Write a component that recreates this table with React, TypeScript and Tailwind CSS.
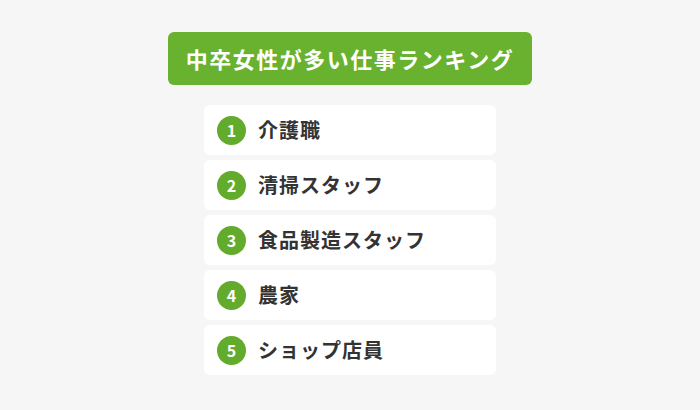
import React from "react";

const jobs = ["介護職", "清掃スタッフ", "食品製造スタッフ", "農家", "ショップ店員"];

export default function App() {
  return (
    <div
      className="w-[700px] h-[410px] bg-[#f6f6f6] flex flex-col items-center pt-[32px]"
      style={{ fontFamily: '"Noto Sans CJK JP", "Noto Sans", sans-serif' }}
    >
      {/* Title */}
      <div className="w-[364px] h-[53px] rounded-[6px] bg-[#68b22f] flex items-center justify-center">
        <h1 className="text-[22px] font-bold text-white tracking-[1.5px]">中卒女性が多い仕事ランキング</h1>
      </div>

      {/* Ranking list */}
      <div className="mt-[20px] flex flex-col gap-[5px]">
        {jobs.map((job, i) => (
          <div key={job} className="w-[292px] h-[50px] bg-white rounded-[6px] flex items-center pl-[13px] gap-[12px]">
            <span className="w-[29px] h-[29px] rounded-full bg-[#63ab2c] text-white text-[16px] font-bold flex items-center justify-center">
              {i + 1}
            </span>
            <span className="text-[20px] font-bold text-[#333333] tracking-[1px]">{job}</span>
          </div>
        ))}
      </div>
    </div>
  );
}
